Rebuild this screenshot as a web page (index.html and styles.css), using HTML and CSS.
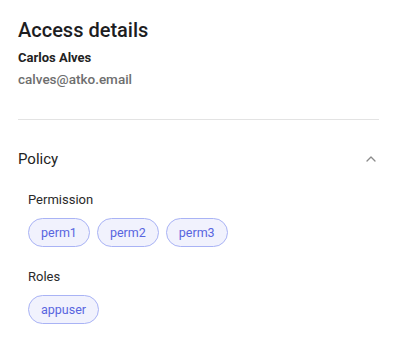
FILE: index.html
```html
<!DOCTYPE html>
<html>
<head>
<meta charset="utf-8">
<link rel="stylesheet" href="styles.css">
</head>
<body>
<div class="panel">
  <header class="head">
    <h1 class="title">Access details</h1>
    <div class="name">Carlos Alves</div>
    <div class="email">calves@atko.email</div>
  </header>
  <hr class="divider">
  <section class="policy">
    <div class="policy-head">
      <span class="policy-title">Policy</span>
      <svg class="chev" width="10" height="6" viewBox="0 0 10 6"><path d="M1 5 L5 1 L9 5" fill="none" stroke="#8a8a8a" stroke-width="1.3" stroke-linecap="round" stroke-linejoin="round"/></svg>
    </div>
    <div class="group">
      <div class="label">Permission</div>
      <div class="chips">
        <span class="chip">perm1</span>
        <span class="chip">perm2</span>
        <span class="chip">perm3</span>
      </div>
    </div>
    <div class="group">
      <div class="label">Roles</div>
      <div class="chips">
        <span class="chip">appuser</span>
      </div>
    </div>
  </section>
</div>
</body>
</html>
```
FILE: styles.css
```css
html, body {
  margin: 0;
  padding: 0;
  background: #ffffff;
}
body {
  font-family: Roboto, "Noto Sans", sans-serif;
  color: #1f1f1f;
}
.panel {
  padding: 18px 14px 0 18px;
}
.head {
  display: flex;
  flex-direction: column;
}
.title {
  margin: 0;
  font-size: 20px;
  line-height: 24px;
  font-weight: 500;
  color: #1d1d1f;
}
.name {
  margin-top: 8px;
  font-size: 13px;
  line-height: 16px;
  font-weight: 700;
  color: #222;
}
.email {
  margin-top: 5px;
  font-size: 13.5px;
  line-height: 16px;
  font-weight: 500;
  color: #6e6e6e;
}
.divider {
  margin: 32px 0 0 0;
  border: 0;
  border-top: 1px solid #e3e3e3;
  height: 0;
}
.policy-head {
  display: flex;
  justify-content: space-between;
  align-items: center;
  margin-top: 30px;
  padding-right: 3px;
}
.policy-title {
  font-size: 15px;
  line-height: 18px;
  font-weight: 400;
  color: #222;
}
.chev {
  display: block;
}
.group {
  padding-left: 10px;
  margin-top: 24px;
}
.group + .group {
  margin-top: 22px;
}
.label {
  font-size: 13px;
  line-height: 16px;
  color: #2a2a2a;
}
.chips {
  display: flex;
  gap: 7px;
  margin-top: 10px;
}
.chip {
  display: inline-flex;
  align-items: center;
  box-sizing: border-box;
  height: 29px;
  padding: 0 12px;
  border: 1px solid #a9b3f5;
  border-radius: 15px;
  background: #f1f2fd;
  color: #5865e0;
  font-size: 12.5px;
}
```
